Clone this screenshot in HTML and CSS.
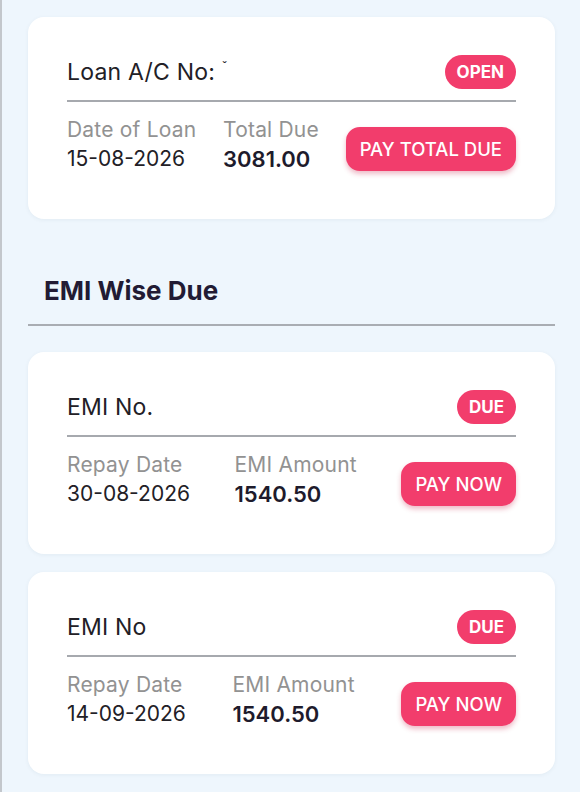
FILE: index.html
```html
<!DOCTYPE html>
<html>
<head>
<meta charset="utf-8">
<link rel="stylesheet" href="styles.css">
</head>
<body>
<div class="page">
  <div class="card">
    <div class="card-head">
      <span class="title">Loan A/C No: <span class="tick">ˇ</span></span>
      <span class="badge">OPEN</span>
    </div>
    <div class="rule"></div>
    <div class="card-body">
      <div class="col">
        <div class="label">Date of Loan</div>
        <div class="value">15-08-2026</div>
      </div>
      <div class="col">
        <div class="label">Total Due</div>
        <div class="value amount">3081.00</div>
      </div>
      <button class="btn">PAY TOTAL DUE</button>
    </div>
  </div>

  <h2 class="section-title">EMI Wise Due</h2>
  <div class="section-rule"></div>

  <div class="card">
    <div class="card-head">
      <span class="title">EMI No.</span>
      <span class="badge">DUE</span>
    </div>
    <div class="rule"></div>
    <div class="card-body">
      <div class="col">
        <div class="label">Repay Date</div>
        <div class="value">30-08-2026</div>
      </div>
      <div class="col">
        <div class="label">EMI Amount</div>
        <div class="value amount">1540.50</div>
      </div>
      <button class="btn">PAY NOW</button>
    </div>
  </div>

  <div class="card second">
    <div class="card-head">
      <span class="title">EMI No</span>
      <span class="badge">DUE</span>
    </div>
    <div class="rule"></div>
    <div class="card-body">
      <div class="col">
        <div class="label">Repay Date</div>
        <div class="value">14-09-2026</div>
      </div>
      <div class="col">
        <div class="label">EMI Amount</div>
        <div class="value amount">1540.50</div>
      </div>
      <button class="btn">PAY NOW</button>
    </div>
  </div>
</div>
</body>
</html>
```
FILE: styles.css
```css
* { box-sizing: border-box; }
html, body { margin: 0; padding: 0; }
body {
  background: #eef6fd;
  border-left: 2px solid #c3c7cc;
  min-height: 792px;
  font-family: "Inter", "Noto Sans", sans-serif;
  color: #222026;
}
.page {
  padding: 17px 25px 0 26px;
}
.card {
  background: #ffffff;
  border-radius: 16px;
  padding: 38px 39px 45px 39px;
  box-shadow: 0 1px 4px rgba(40, 60, 90, 0.06);
}
.card.second { margin-top: 18px; }
.card-head {
  display: flex;
  align-items: center;
  justify-content: space-between;
  height: 34px;
}
.title {
  font-size: 23px;
  color: #222026;
  letter-spacing: 0.2px;
}
.tick { font-size: 14px; vertical-align: top; }
.badge {
  background: #f23d6c;
  color: #ffffff;
  font-weight: 700;
  font-size: 17px;
  height: 34px;
  line-height: 34px;
  padding: 0 12px;
  border-radius: 17px;
}
.rule {
  height: 2px;
  background: #a6a9ae;
  margin-top: 11px;
}
.card-body {
  display: flex;
  align-items: center;
  justify-content: space-between;
  margin-top: 14px;
  height: 58px;
}
.label {
  font-size: 21px;
  line-height: 28px;
  color: #929292;
  letter-spacing: 0.2px;
}
.value {
  font-size: 21px;
  line-height: 30px;
  color: #222026;
}
.value.amount {
  font-weight: 600;
  font-size: 22px;
  color: #1e1b2c;
}
.btn {
  font-family: inherit;
  background: #f23d6c;
  color: #ffffff;
  border: none;
  font-size: 18.5px;
  font-weight: 500;
  height: 44px;
  padding: 0 14px;
  border-radius: 14px;
  margin-top: 7px;
  box-shadow: 0 3px 5px rgba(200, 30, 70, 0.3);
}
.section-title {
  margin: 55px 0 0 0;
  padding-left: 16px;
  font-size: 26px;
  line-height: 34px;
  font-weight: 700;
  color: #221b34;
}
.section-rule {
  height: 2px;
  background: #a9adb3;
  margin: 16px 0 26px 0;
}
```
